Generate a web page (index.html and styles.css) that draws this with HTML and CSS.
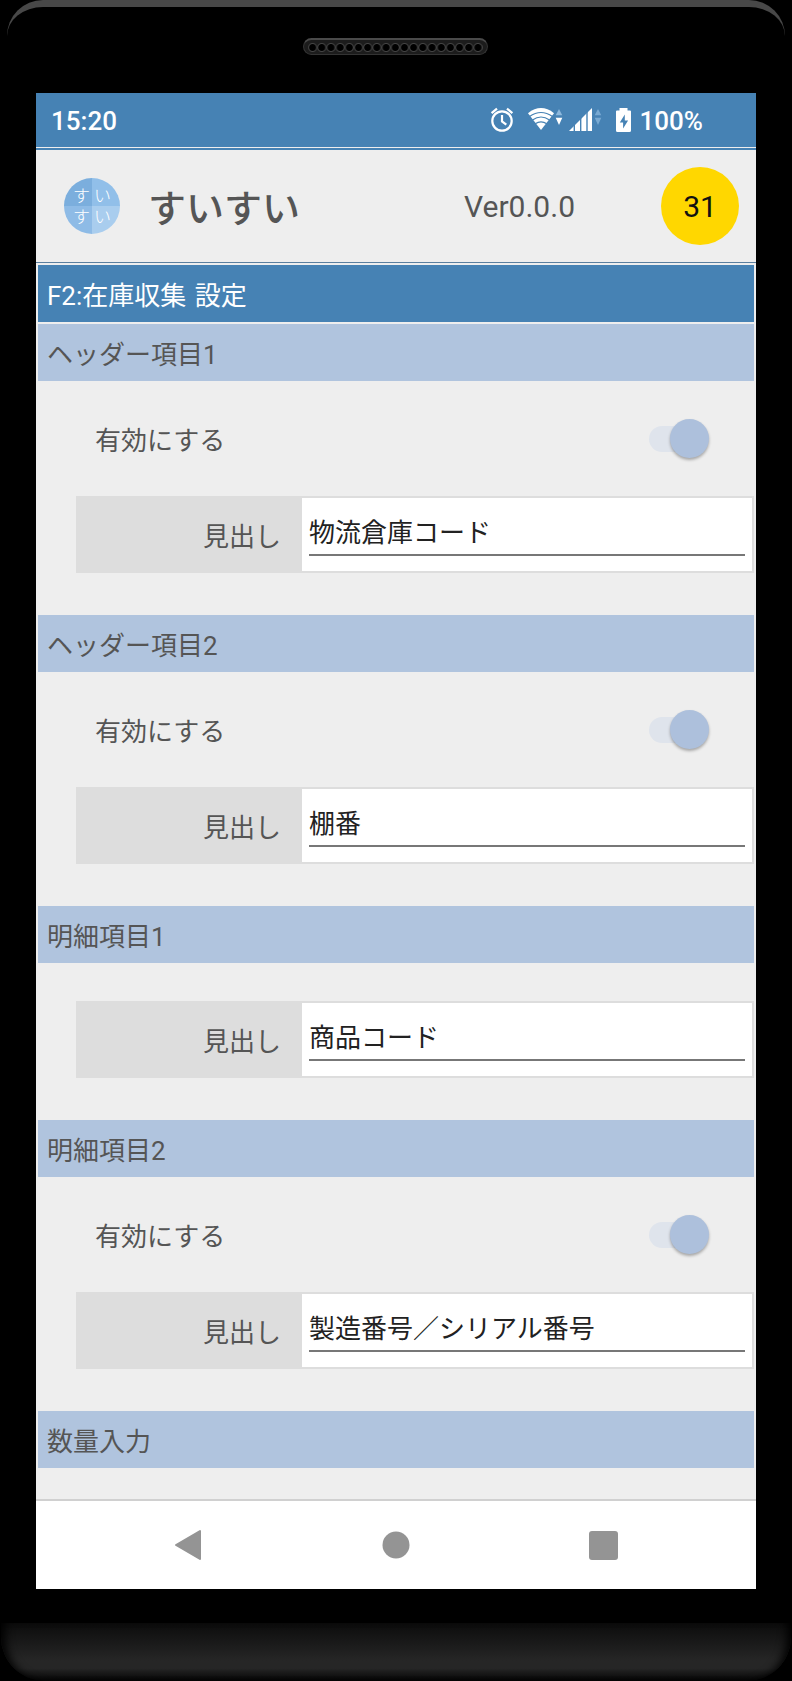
FILE: index.html
```html
<!DOCTYPE html>
<html lang="ja">
<head>
    <meta charset="UTF-8">
    <meta name="viewport" content="width=device-width, initial-scale=1.0">
    <title>すいすい - 在庫収集 設定</title>
    <link rel="stylesheet" href="styles.css">
</head>
<body>

    <div class="phone">
        <div class="phone-top">
            <div class="speaker"><div class="speaker-holes"></div></div>
        </div>

        <div class="screen">
            <div class="status-bar">
                <span class="clock">15:20</span>
                <svg class="status-icons" width="142" height="30" viewBox="0 0 142 30">
                    <!-- alarm -->
                    <g fill="none" stroke="#fff" stroke-width="2.2">
                        <circle cx="12" cy="16" r="9.7"/>
                        <path d="M12 10v6.5l4.3 3.2M1.6 8.2l5.4-4.6M22.400 8.2L17 3.6"/>
                    </g>
                    <!-- wifi -->
                    <path fill="#fff" d="M51 25L38 8.200Q51-2 64 8.200z"/>
                    <path fill="none" stroke="#4682b4" stroke-width="1.2" d="M39.500 11.500Q51 3.500 62.500 11.500M42.500 15Q51 9 59.500 15M45.200 18.800Q51 14.800 56.800 18.800"/>
                    <path fill="#8db8dc" d="M69 4l3.3 6.3h-6.6z"/>
                    <path fill="#fff" d="M69 20l3.3-7.3h-6.6z"/>
                    <!-- signal -->
                    <path fill="#fff" d="M79 26L102 3v23z"/>
                    <path stroke="#4682b4" stroke-width="1.4" d="M84.3 15v12M90.7 10v17M97 4v23"/>
                    <path fill="#78a9d2" d="M108 4l3.3 6.3h-6.6zM108 20l3.3-7.3h-6.6z"/>
                    <!-- battery -->
                    <path fill="#fff" d="M129.500 3h8v2.500h2.500q1 0 1 1V25.500q0 1.500-1.500 1.500h-12q-1.500 0-1.500-1.500V6.500q0-1 1-1h2.500z"/>
                    <path fill="#4682b4" d="M134.800 9.500l-5 8h3.300v6l5-8h-3.300z"/>
                </svg>
                <span class="battery-text">100%</span>
            </div>

            <div class="app-header">
                <div class="logo">
                    <span>す</span><span>い</span><span>す</span><span>い</span>
                </div>
                <h1>すいすい</h1>
                <span class="version">Ver0.0.0</span>
                <span class="day-badge">31</span>
            </div>

            <div class="content">
                <h2 class="page-title">F2:在庫収集 設定</h2>

                <section class="item">
                    <h3>ヘッダー項目1</h3>
                    <div class="toggle-row">
                        <span>有効にする</span>
                        <span class="switch"><span class="thumb"></span></span>
                    </div>
                    <div class="field">
                        <span class="field-label">見出し</span>
                        <div class="field-box"><div class="field-value">物流倉庫コード</div></div>
                    </div>
                </section>

                <section class="item">
                    <h3>ヘッダー項目2</h3>
                    <div class="toggle-row">
                        <span>有効にする</span>
                        <span class="switch"><span class="thumb"></span></span>
                    </div>
                    <div class="field">
                        <span class="field-label">見出し</span>
                        <div class="field-box"><div class="field-value">棚番</div></div>
                    </div>
                </section>

                <section class="item no-toggle">
                    <h3>明細項目1</h3>
                    <div class="field">
                        <span class="field-label">見出し</span>
                        <div class="field-box"><div class="field-value">商品コード</div></div>
                    </div>
                </section>

                <section class="item">
                    <h3>明細項目2</h3>
                    <div class="toggle-row">
                        <span>有効にする</span>
                        <span class="switch"><span class="thumb"></span></span>
                    </div>
                    <div class="field">
                        <span class="field-label">見出し</span>
                        <div class="field-box"><div class="field-value">製造番号／シリアル番号</div></div>
                    </div>
                </section>

                <section class="item last">
                    <h3>数量入力</h3>
                </section>
            </div>

            <div class="nav-bar">
                <svg width="28" height="32" viewBox="0 0 28 32"><path fill="#949494" stroke="#949494" stroke-width="2" stroke-linejoin="round" d="M2 16L26 2v28z"/></svg>
                <svg width="28" height="28" viewBox="0 0 28 28"><circle cx="14" cy="14" r="13.500" fill="#949494"/></svg>
                <svg width="29" height="29" viewBox="0 0 29 29"><rect width="29" height="29" rx="3" fill="#949494"/></svg>
            </div>
        </div>

        <div class="phone-bottom"></div>
    </div>

</body>
</html>
```
FILE: styles.css
```css
* {
    box-sizing: border-box;
}

body {
    margin: 0;
    background: #000;
    color: #555;
    font-family: Roboto, "Noto Sans CJK JP", sans-serif;
    font-size: 26px;
}

h1, h2, h3 {
    margin: 0;
    font-weight: 400;
}

/* Phone body */
.phone {
    width: 792px;
    height: 1681px;
    display: flex;
    flex-direction: column;
    align-items: center;
    overflow: hidden;
}

.phone-top {
    width: 778px;
    height: 93px;
    flex: none;
    display: flex;
    justify-content: center;
    border-top: 7px solid #484848;
    border-radius: 36px 36px 0 0;
}

.speaker {
    width: 185px;
    height: 17px;
    margin: 31px 1px 0 0;
    padding: 3px 4px;
    background: #1c1c1c;
    border: 1px solid #333;
    border-top: 2px solid #4a4a4a;
    border-radius: 9px;
}

.speaker-holes {
    width: 174.8px;
    height: 10px;
    background: radial-gradient(circle at 50% 45%, #000 3px, #444 4px, #1c1c1c 5px) 0 0 / 9.2px 10px repeat-x;
}

.phone-bottom {
    width: 790px;
    height: 58px;
    margin-top: 34px;
    flex: none;
    border-radius: 0 0 44px 44px;
    background: linear-gradient(#0c0c0c, #262626 65%, #262626 78%, #040404);
    box-shadow: inset 10px 0 10px -6px #000, inset -10px 0 10px -6px #000;
}

.screen {
    width: 720px;
    height: 1496px;
    flex: none;
    display: flex;
    flex-direction: column;
    background: #eee;
}

/* Status bar */
.status-bar {
    height: 57px;
    flex: none;
    display: flex;
    align-items: center;
    padding: 0 53px 3px 15px;
    background: linear-gradient(#4682b4 54px, #eee 54px, #eee 55px, #4682b4 55px);
    color: #fff;
    font-weight: 500;
}

.clock,
.battery-text {
    padding-top: 2px;
}

.status-icons {
    margin: 0 8px 0 auto;
}

/* App header */
.app-header {
    height: 113px;
    flex: none;
    display: flex;
    align-items: center;
    padding: 0 17px 0 28px;
    border-bottom: 1px solid #5b7f9f;
}

.logo {
    width: 56px;
    height: 56px;
    display: grid;
    grid-template-columns: 21px 21px;
    grid-template-rows: 21px 21px;
    place-content: center;
    place-items: center;
    padding-top: 1px;
    border-radius: 50%;
    background: conic-gradient(#91bfe9 25%, #a9cdee 25% 50%, #8ebbe6 50% 75%, #7baedd 75%);
    color: #fff;
    font-size: 17px;
    font-weight: 300;
    line-height: 21px;
}

.app-header h1 {
    margin-left: 28px;
    padding-top: 5px;
    font-size: 38px;
    font-weight: 500;
    line-height: 56px;
}

.version {
    margin-left: auto;
    font-size: 30px;
}

.day-badge {
    width: 78px;
    height: 78px;
    margin-left: 86px;
    border-radius: 50%;
    background: #ffd700;
    color: #111;
    font-size: 30px;
    line-height: 79px;
    text-align: center;
}

/* Settings list */
.content {
    flex: 1;
    min-height: 0;
    padding: 2px 2px 0;
    overflow: hidden;
}

.page-title {
    height: 57px;
    margin-bottom: 2px;
    padding-left: 9px;
    background: #4682b4;
    color: #fff;
    font-size: 26px;
    line-height: 62px;
    word-spacing: 2px;
}

.item {
    padding-bottom: 42px;
}

.item.last {
    padding-bottom: 0;
}

.item h3 {
    height: 57px;
    padding-left: 9px;
    background: #b0c4de;
    font-size: 26px;
    line-height: 62px;
}

.toggle-row {
    height: 115px;
    display: flex;
    align-items: center;
    justify-content: space-between;
    padding: 0 45px 0 57px;
}

.switch {
    width: 60px;
    height: 26px;
    display: flex;
    align-items: center;
    justify-content: flex-end;
    border-radius: 13px;
    background: linear-gradient(90deg, #dfe4ec 40px, transparent 40px);
}

.thumb {
    width: 39px;
    height: 39px;
    flex: none;
    border-radius: 50%;
    background: #adc0dc;
    box-shadow: 0 2px 3px rgba(0, 0, 0, 0.3);
}

.field {
    height: 77px;
    display: flex;
    margin-left: 38px;
    border: 2px solid #ddd;
    background: #ddd;
}

.no-toggle .field {
    margin-top: 38px;
}

.field-label {
    width: 224px;
    padding-right: 21px;
    line-height: 78px;
    text-align: right;
}

.field-box {
    flex: 1;
    padding: 7px 7px 0;
    background: #fff;
}

.field-value {
    height: 51px;
    border-bottom: 2px solid #777;
    color: #222;
    line-height: 56px;
}

/* Android navigation */
.nav-bar {
    height: 90px;
    flex: none;
    display: flex;
    align-items: center;
    justify-content: space-between;
    padding: 0 138px;
    border-top: 2px solid #d0d0d0;
    background: #fff;
}
```
